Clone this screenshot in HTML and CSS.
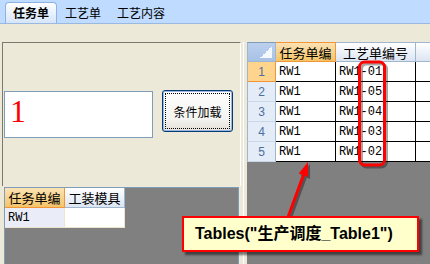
FILE: index.html
```html
<!DOCTYPE html>
<html>
<head>
<meta charset="utf-8">
<link rel="stylesheet" href="styles.css">
</head>
<body>
<div class="tabbar">
  <div class="tab active">任务单</div>
  <div class="tab">工艺单</div>
  <div class="tab">工艺内容</div>
</div>
<div class="main">
  <div class="leftcol">
    <div class="panel">
      <div class="textbox">1</div>
      <div class="btn"><span class="btn-inner">条件加载</span></div>
    </div>
    <div class="subgrid">
      <div class="sgrid">
        <div class="shead sel">任务单编</div>
        <div class="shead">工装模具</div>
        <div class="scell first mono">RW1</div>
        <div class="scell"></div>
      </div>
    </div>
  </div>
  <div class="splitter"></div>
  <div class="rightgrid">
    <div class="bgrid">
      <div class="corner"></div>
      <div class="head sel">任务单编</div>
      <div class="head">工艺单编号</div>
      <div class="head"></div>

      <div class="rowhead sel">1</div>
      <div class="cell mono">RW1</div>
      <div class="cell mono">RW1-01</div>
      <div class="cell"></div>

      <div class="rowhead">2</div>
      <div class="cell mono">RW1</div>
      <div class="cell mono">RW1-05</div>
      <div class="cell"></div>

      <div class="rowhead">3</div>
      <div class="cell mono">RW1</div>
      <div class="cell mono">RW1-04</div>
      <div class="cell"></div>

      <div class="rowhead">4</div>
      <div class="cell mono">RW1</div>
      <div class="cell mono">RW1-03</div>
      <div class="cell"></div>

      <div class="rowhead">5</div>
      <div class="cell mono">RW1</div>
      <div class="cell mono">RW1-02</div>
      <div class="cell"></div>
    </div>
  </div>
</div>
<div class="overlay">
  <svg class="marks" width="430" height="264" viewBox="0 0 430 264">
    <g class="shadow" transform="translate(2 2)">
      <rect x="359.5" y="62" width="25" height="103" rx="5" fill="none" stroke="#000" stroke-opacity="0.35" stroke-width="3"/>
      <line x1="287" y1="220" x2="303.4" y2="175.2" stroke="#000" stroke-opacity="0.35" stroke-width="3"/>
      <polygon points="308,162 308.1,176.9 298.7,173.6" fill="#000" fill-opacity="0.35"/>
    </g>
    <rect x="359.5" y="62" width="25" height="103" rx="5" fill="none" stroke="#FF0000" stroke-width="3"/>
    <line x1="287" y1="220" x2="303.4" y2="175.2" stroke="#FF0000" stroke-width="3"/>
    <polygon points="308,162 308.1,176.9 298.7,173.6" fill="#FF0000"/>
  </svg>
  <div class="callout">Tables("生产调度_Table1")</div>
</div>
</body>
</html>
```
FILE: styles.css
```css
html, body {
  margin: 0;
  padding: 0;
}
body {
  width: 430px;
  height: 264px;
  overflow: hidden;
  position: relative;
  background: #ECE9D8;
  font-family: "Noto Sans CJK SC", sans-serif;
  color: #000;
}
.tabbar {
  height: 23px;
  background: #BFDBFF;
  border-bottom: 1px solid #99B9E2;
  display: flex;
  align-items: flex-end;
  padding-left: 5px;
}
.tab {
  height: 21px;
  line-height: 21px;
  padding: 0 8px;
  font-size: 12px;
  box-sizing: border-box;
}
.tab.active {
  font-weight: bold;
  padding: 0 7px;
  background: linear-gradient(#FDFEFF, #D6E5F8);
  border: 1px solid #8DB2E3;
  border-bottom: none;
  border-radius: 4px 4px 0 0;
  line-height: 20px;
}
.main {
  display: flex;
  margin-top: 18px;
  height: 222px;
}
.leftcol {
  width: 241px;
  display: flex;
  flex-direction: column;
}
.panel {
  height: 144px;
  margin-left: 2px;
  box-sizing: border-box;
  border-top: 1px solid #7A7A70;
  border-left: 1px solid #7A7A70;
  border-right: 1px solid #FFFFFF;
  display: flex;
  align-items: flex-start;
  padding-top: 47px;
}
.textbox {
  width: 149px;
  height: 47px;
  box-sizing: border-box;
  margin-top: 1px;
  margin-left: 1px;
  border: 1px solid #7F9DB9;
  background: #FFFFFF;
  color: #FF0000;
  font-family: "Liberation Serif", serif;
  font-size: 32px;
  line-height: 32px;
  padding: 3px 0 0 5px;
}
.btn {
  width: 71px;
  height: 42px;
  box-sizing: border-box;
  margin-left: 9px;
  border: 1px solid #003C74;
  border-radius: 3px;
  background: linear-gradient(#FFFFFF, #F3F3EF 70%, #E3E1D8);
  box-shadow: inset 0 0 0 1px #9CB8E0;
  padding: 2px;
  display: flex;
}
.btn-inner {
  flex: 1;
  border: 1px dotted #000;
  display: flex;
  align-items: center;
  justify-content: center;
  font-size: 12px;
}
.subgrid {
  margin-top: 1px;
  margin-left: 4px;
  width: 235px;
  flex: 1;
  box-sizing: border-box;
  background: #808080;
  border-top: 1px solid #7F9DB9;
  border-left: 1px solid #7F9DB9;
  border-right: 1px solid #7F9DB9;
}
.sgrid {
  display: grid;
  grid-template-columns: 60px 60px;
  grid-auto-rows: 20px;
}
.shead, .head {
  box-sizing: border-box;
  display: flex;
  align-items: center;
  justify-content: center;
  font-size: 13px;
  background: linear-gradient(#FFFFFF, #DCE5F3);
  border-right: 1px solid #9EB6CE;
  border-bottom: 1px solid #9EB6CE;
}
.shead.sel, .head.sel {
  background: linear-gradient(#FBE2B4, #F5C468);
  border-right: 1px solid #F29536;
  border-bottom: 1px solid #F29536;
}
.scell {
  box-sizing: border-box;
  background: #FFFFFF;
  border-right: 1px solid #EEE3CC;
  border-bottom: 1px solid #EEE3CC;
}
.scell.first {
  background: #EAEDF7;
}
.mono {
  font-family: "Liberation Mono", monospace;
  font-size: 12px;
  display: flex;
  align-items: center;
  padding-left: 3px;
}
.splitter {
  width: 6px;
  background: linear-gradient(to right, #ECE9D8 2px, #FFFFFF 2px, #FFFFFF 3px, #ECE9D8 3px);
}
.rightgrid {
  flex: 1;
  background: #808080;
  overflow: hidden;
}
.bgrid {
  display: grid;
  grid-template-columns: 29px 60px 80px 60px;
  grid-auto-rows: 20px;
}
.corner {
  box-sizing: border-box;
  border: 1px solid #9EB6CE;
  border-top-color: #7F9DB9;
  background: linear-gradient(to bottom right, transparent 50%, #F4F7FC 50%) right 3px bottom 3px / 12px 12px no-repeat, linear-gradient(#BCD0EE, #A7C1E6);
}
.head {
  border-top: 1px solid #9EB6CE;
}
.head.sel {
  border-top: 1px solid #F29536;
}
.rowhead {
  box-sizing: border-box;
  display: flex;
  align-items: center;
  justify-content: center;
  font-family: "Liberation Sans", sans-serif;
  font-size: 12px;
  color: #4D6EA0;
  background: #E4ECF7;
  border-left: 1px solid #9EB6CE;
  border-right: 1px solid #9EB6CE;
  border-bottom: 1px solid #C9D7EA;
}
.rowhead.sel {
  background: #FFD58D;
  border-right: 1px solid #F29536;
  border-bottom: 1px solid #F29536;
}
.cell {
  box-sizing: border-box;
  background: #FFFFFF;
  border-right: 1px solid #000;
  border-bottom: 1px solid #000;
}
.overlay {
  position: absolute;
  left: 0;
  top: 0;
  width: 430px;
  height: 264px;
  pointer-events: none;
}
.marks {
  position: absolute;
  left: 0;
  top: 0;
}
.callout {
  position: absolute;
  left: 182px;
  top: 216px;
  width: 237px;
  height: 36px;
  box-sizing: border-box;
  border: 2px solid #FF0000;
  background: #FFFFCC;
  box-shadow: 3px 3px 2px rgba(0, 0, 0, 0.5);
  font-family: "Liberation Sans", "Noto Sans CJK SC", sans-serif;
  font-weight: bold;
  font-size: 16px;
  line-height: 32px;
  padding-left: 11px;
  white-space: nowrap;
}
```
